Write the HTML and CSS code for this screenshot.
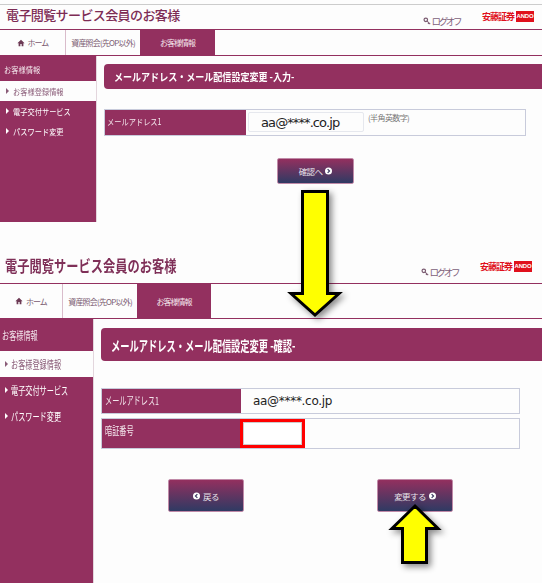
FILE: index.html
```html
<!DOCTYPE html>
<html lang="ja">
<head>
	<meta charset="UTF-8">
	<title>メールアドレス・メール配信設定変更</title>
	<link rel="stylesheet" href="styles.css">
</head>
<body>

	<div class="page">
		<section class="screen screen-input">
			<header class="head">
				<h1 class="site-title">電子閲覧サービス会員のお客様</h1>
				<a class="logoff" href="#">
					<svg class="key" viewBox="0 0 10 10"><circle cx="3.5" cy="3.5" r="2.2" fill="none" stroke="#7a5a70" stroke-width="1.5"/><path d="M5 5l4 4M7.4 7.4l-1.2 1.2" fill="none" stroke="#7a5a70" stroke-width="1.3"/></svg>ログオフ
				</a>
				<div class="logo"><span class="logo-name">安藤証券</span><span class="logo-box">ANDO</span></div>
			</header>
			<nav class="nav">
				<a class="nav-home" href="#"><svg class="home" viewBox="0 0 10 10"><path d="M5 1L0.5 5.2h1.5V9h2.2V6.4h1.6V9H8V5.2h1.5z" fill="#6d3a55"/></svg>ホーム</a>
				<a class="nav-acct" href="#">資産照会(先OP以外)</a>
				<a class="nav-on" href="#">お客様情報</a>
			</nav>
			<div class="body">
				<aside class="side">
					<div class="side-head"><span class="txt">お客様情報</span></div>
					<a class="side-item on" href="#"><span class="txt">お客様登録情報</span></a>
					<a class="side-item" href="#"><span class="txt">電子交付サービス</span></a>
					<a class="side-item" href="#"><span class="txt">パスワード変更</span></a>
				</aside>
				<main class="content">
					<h2 class="bar"><span class="txt">メールアドレス・メール配信設定変更 -入力-</span></h2>
					<div class="row">
						<div class="row-label"><span class="txt">メールアドレス1</span></div>
						<div class="row-value">
							<div class="field">aa@****.co.jp</div>
							<span class="hint">(半角英数字)</span>
						</div>
					</div>
					<div class="actions">
						<a class="btn" href="#">確認へ<svg class="dot" viewBox="0 0 8 8"><circle cx="4" cy="4" r="4" fill="#fff"/><path d="M3 1.8L5.2 4L3 6.2" fill="none" stroke="#3a3a60" stroke-width="1.4"/></svg></a>
					</div>
				</main>
			</div>
		</section>

		<section class="screen screen-confirm">
			<header class="head">
				<h1 class="site-title">電子閲覧サービス会員のお客様</h1>
				<a class="logoff" href="#">
					<svg class="key" viewBox="0 0 10 10"><circle cx="3.5" cy="3.5" r="2.2" fill="none" stroke="#7a5a70" stroke-width="1.5"/><path d="M5 5l4 4M7.4 7.4l-1.2 1.2" fill="none" stroke="#7a5a70" stroke-width="1.3"/></svg>ログオフ
				</a>
				<div class="logo"><span class="logo-name">安藤証券</span><span class="logo-box">ANDO</span></div>
			</header>
			<nav class="nav">
				<a class="nav-home" href="#"><svg class="home" viewBox="0 0 10 10"><path d="M5 1L0.5 5.2h1.5V9h2.2V6.4h1.6V9H8V5.2h1.5z" fill="#6d3a55"/></svg>ホーム</a>
				<a class="nav-acct" href="#">資産照会(先OP以外)</a>
				<a class="nav-on" href="#">お客様情報</a>
			</nav>
			<div class="body">
				<aside class="side">
					<div class="side-head"><span class="txt">お客様情報</span></div>
					<a class="side-item on" href="#"><span class="txt">お客様登録情報</span></a>
					<a class="side-item" href="#"><span class="txt">電子交付サービス</span></a>
					<a class="side-item" href="#"><span class="txt">パスワード変更</span></a>
				</aside>
				<main class="content">
					<h2 class="bar"><span class="txt">メールアドレス・メール配信設定変更 -確認-</span></h2>
					<div class="row">
						<div class="row-label"><span class="txt">メールアドレス1</span></div>
						<div class="row-value"><span class="plain">aa@****.co.jp</span></div>
					</div>
					<div class="row row-code">
						<div class="row-label"><span class="txt">暗証番号</span></div>
						<div class="row-value"><div class="code"></div></div>
					</div>
					<div class="actions">
						<a class="btn" href="#"><svg class="dot" viewBox="0 0 8 8"><circle cx="4" cy="4" r="4" fill="#fff"/><path d="M5 1.8L2.8 4L5 6.2" fill="none" stroke="#3a3a60" stroke-width="1.4"/></svg>戻る</a>
						<a class="btn" href="#">変更する<svg class="dot" viewBox="0 0 8 8"><circle cx="4" cy="4" r="4" fill="#fff"/><path d="M3 1.8L5.2 4L3 6.2" fill="none" stroke="#3a3a60" stroke-width="1.4"/></svg></a>
					</div>
				</main>
			</div>
		</section>

		<svg class="arrow arrow-down" viewBox="0 0 60 132">
			<path d="M16.5 3.5H41.5V105.5H53L29 127L5 105.5H16.5Z" fill="#ffff00" stroke="#000" stroke-width="3"/>
		</svg>
		<svg class="arrow arrow-up" viewBox="0 0 60 65">
			<path d="M29 5L52 27.5H40.5V61.5H16.5V27.5H6Z" fill="#ffff00" stroke="#000" stroke-width="3"/>
		</svg>
	</div>

</body>
</html>
```

FILE: styles.css
```css
* {
	margin: 0;
	padding: 0;
	box-sizing: border-box;
	text-decoration: none;
}
body {
	background: #fdfdfd;
	font-family: "Noto Sans CJK JP", "Noto Sans", sans-serif;
	color: #fff;
	overflow: hidden;
}
.page {
	position: relative;
	width: 542px;
	height: 583px;
	overflow: hidden;
}
.screen-input {
	height: 244px;
	padding-top: 4px;
}
/* the screenshots were squeezed sideways, so the text is too */
.txt {
	display: inline-block;
	transform-origin: left center;
	white-space: nowrap;
}

/* head */
.head {
	display: flex;
	align-items: center;
}
.screen-input .head {
	height: 26px;
	border-top: 1px solid #ccc;
	border-bottom: 1px solid #93305f;
	padding: 0 8px 0 6px;
}
.screen-confirm .head {
	height: 40px;
	padding: 9px 10px 0 5px;
	border-bottom: 1px solid #93305f;
}
.site-title {
	flex: 1;
	color: #7d2c55;
	font-weight: 500;
	transform-origin: left center;
	white-space: nowrap;
}
.screen-input .site-title {
	font-size: 13px;
	letter-spacing: -.6px;
	margin-bottom: 5px;
}
.screen-confirm .site-title {
	font-size: 15.5px;
	transform: scaleX(.79);
	font-weight: 700;
	color: #7f3058;
	margin-bottom: 7px;
}
.logoff {
	display: flex;
	align-items: center;
	color: #80607a;
	font-size: 9.5px;
	letter-spacing: -2.4px;
	margin-right: 22px;
	padding-top: 8px;
}
.key {
	width: 8px;
	height: 8px;
	margin-right: 1px;
}
.logo {
	display: flex;
	align-items: center;
	gap: 2px;
	margin-bottom: 3px;
}
.screen-input .logo {
	margin-top: 2px;
}
.logo-name {
	color: #e0101c;
	font-size: 9px;
	font-weight: 700;
	letter-spacing: -1px;
}
.logo-box {
	background: #e0101c;
	color: #fff;
	font: 700 6px/10px "Liberation Sans", sans-serif;
	letter-spacing: -.2px;
	width: 18px;
	height: 11px;
	text-align: center;
}

/* nav */
.nav {
	display: flex;
	border-bottom: 1px solid #93305f;
	font-size: 8px;
	letter-spacing: -1px;
	color: #7a5a70;
}
.nav a {
	display: flex;
	align-items: center;
	justify-content: center;
	color: #7a5a70;
	white-space: nowrap;
}
.screen-input .nav {
	height: 26px;
}
.screen-confirm .nav {
	height: 35px;
}
.screen-input .nav-home { width: 66px; border-right: 1px solid #d9bccb; }
.screen-input .nav-acct { width: 74px; letter-spacing: -.8px; }
.screen-input .nav-on { width: 75px; }
.screen-confirm .nav-home { width: 63px; border-right: 1px solid #d9bccb; }
.screen-confirm .nav-acct { width: 74px; letter-spacing: -.8px; }
.screen-confirm .nav-on { width: 74px; }
.nav .nav-on {
	background: #93305f;
	color: #f3e6ec;
}
.home {
	width: 8px;
	height: 8px;
	margin-right: 3px;
}

/* side menu */
.body {
	display: flex;
}
.side {
	flex: none;
	background: #93305f;
	border-right: 1px solid #e3d6dd;
}
.screen-input .side {
	width: 97px;
	height: 166px;
	font-size: 8.5px;
}
.screen-input .side .txt { transform: scaleX(.85); }
.screen-confirm .side {
	width: 94px;
	height: 264px;
	font-size: 11px;
}
.screen-confirm .side .txt { transform: scaleX(.65); }
.side-head {
	display: flex;
	align-items: center;
	padding-left: 4px;
	color: #f3e6ec;
}
.screen-input .side-head { height: 25px; }
.screen-confirm .side-head { height: 32px; padding-left: 2px; }
.side-item {
	display: flex;
	align-items: center;
	color: #fff;
	padding-left: 13px;
	position: relative;
}
.side-item::before {
	content: "";
	position: absolute;
	left: 6px;
	top: 50%;
	margin-top: -3px;
	border-left: 3px solid currentColor;
	border-top: 3px solid transparent;
	border-bottom: 3px solid transparent;
}
.screen-input .side-item { height: 20px; }
.screen-confirm .side-item { height: 26px; padding-left: 11px; }
.screen-confirm .side-item::before { left: 5px; }
.side-item.on {
	background: #fdfdfd;
	color: #8a5c78;
}

/* content */
.content {
	flex: 1;
	min-width: 0;
}
.screen-input .content { padding: 8px 0 0 7px; }
.screen-confirm .content { padding: 9px 0 0 7px; }
.bar {
	display: flex;
	align-items: center;
	background: #93305f;
	border-radius: 4px 0 0 4px;
	color: #fff;
	font-weight: 700;
	white-space: nowrap;
	overflow: hidden;
}
.screen-input .bar {
	height: 25px;
	padding-left: 10px;
	font-size: 10.5px;
}
.screen-input .bar .txt { transform: scaleX(.86); }
.screen-confirm .bar {
	height: 33px;
	padding-left: 10px;
	font-size: 14px;
}
.screen-confirm .bar .txt { transform: scaleX(.66); }
.row {
	display: flex;
	border: 1px solid #c8cbdb;
	background: #fdfdfd;
}
.screen-input .row {
	width: 422px;
	height: 27px;
	margin-top: 20px;
}
.screen-confirm .row {
	width: 419px;
	height: 26px;
	margin-top: 27px;
}
.screen-confirm .row-code {
	height: 31px;
	margin-top: 4px;
}
.row-label {
	flex: none;
	background: #93305f;
	color: #f3e6ec;
	font-size: 8.5px;
	padding: 5px 2px;
}
.screen-input .row-label { width: 141px; }
.screen-input .row-label .txt { transform: scaleX(.85); }
.screen-confirm .row-label { width: 139px; padding: 3px 3px; font-size: 11px; }
.screen-confirm .row-label .txt { transform: scaleX(.65); }
.row-value {
	flex: 1;
	display: flex;
	align-items: flex-start;
	color: #000;
}
.field {
	margin: 2px 0 0 2px;
	width: 116px;
	height: 20px;
	padding-left: 12px;
	border: 1px solid #e6e8ee;
	border-radius: 2px;
	font: 13px/19px "DejaVu Sans", sans-serif;
	letter-spacing: -.9px;
	color: #222;
}
.hint {
	font-size: 8px;
	letter-spacing: -.6px;
	color: #777;
	margin: 2px 0 0 4px;
}
.plain {
	font: 12px/24px "DejaVu Sans", sans-serif;
	letter-spacing: -.3px;
	margin-left: 12px;
	color: #222;
}
.code {
	margin: 0 0 0 -1px;
	width: 65px;
	height: 29px;
	background: #fff;
	border: 3px solid #ff0000;
	box-shadow: inset 0 0 0 1px #ccc;
}

/* buttons */
.actions {
	display: flex;
}
.screen-input .actions {
	padding: 22px 0 0 173px;
}
.screen-confirm .actions {
	padding: 30px 0 0 67px;
	gap: 133px;
}
.btn {
	display: flex;
	align-items: center;
	justify-content: center;
	gap: 3px;
	border: 1px solid #c08aa8;
	border-radius: 2px;
	background: linear-gradient(#93305f, #2f3a63);
	color: #e8e4ea;
	font-size: 8.5px;
	letter-spacing: -.6px;
}
.screen-input .btn { width: 77px; height: 26px; }
.screen-confirm .btn { width: 76px; height: 33px; }
.dot {
	width: 7px;
	height: 8px;
}

/* arrows laid over the two screens */
.arrow {
	position: absolute;
	overflow: visible;
	filter: drop-shadow(3px 3px 3px rgba(0, 0, 0, .45));
}
.arrow-down {
	left: 286px;
	top: 188px;
	width: 60px;
	height: 132px;
}
.arrow-up {
	left: 386px;
	top: 501px;
	width: 60px;
	height: 65px;
}
```
